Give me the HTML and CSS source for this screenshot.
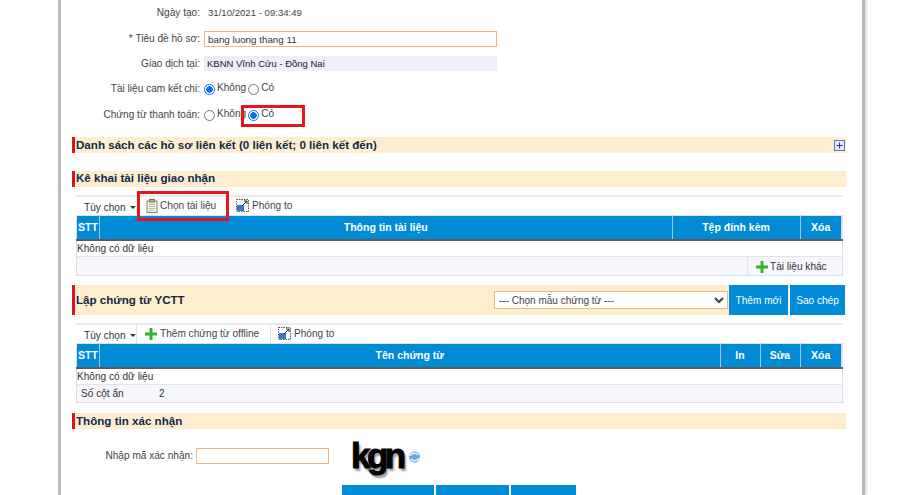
FILE: index.html
```html
<!DOCTYPE html>
<html lang="vi">
<head>
<meta charset="utf-8">
<title>Hồ sơ</title>
<link rel="stylesheet" href="styles.css">
</head>
<body>
<main class="sheet">
  <section class="form">
    <div class="row row-date"><label class="lbl">Ngày tạo:</label><span class="val">31/10/2021 - 09:34:49</span></div>
    <div class="row row-title"><label class="lbl">* Tiêu đề hồ sơ:</label><input class="txt txt-title" type="text" value="bang luong thang 11"></div>
    <div class="row row-place"><label class="lbl">Giao dịch tại:</label><span class="readonly">KBNN Vĩnh Cửu - Đồng Nai</span></div>
    <div class="row row-radio"><label class="lbl">Tài liệu cam kết chi:</label><span class="radio on"></span><span class="rtext">Không</span><span class="radio"></span><span class="rtext">Có</span></div>
    <div class="row row-radio"><label class="lbl">Chứng từ thanh toán:</label><span class="radio"></span><span class="rtext">Không</span><span class="radio on"></span><span class="rtext">Có</span></div>
  </section>

  <h2 class="bar bar-links"><span>Danh sách các hồ sơ liên kết (0 liên kết; 0 liên kết đến)</span>
    <svg class="plus-box" viewBox="0 0 11 11" width="11" height="11"><rect x=".5" y=".5" width="10" height="10" fill="#e4e9fb" stroke="#5a6fc8"/><path d="M5.500 2.500v6M2.500 5.500h6" stroke="#2b3a80"/></svg>
  </h2>

  <h2 class="bar bar-docs"><span>Kê khai tài liệu giao nhận</span></h2>
  <div class="toolbar">
    <span class="tool tool-menu">Tùy chọn<i class="caret"></i></span>
    <span class="tool tool-pick">
      <svg viewBox="0 0 12 14" width="12" height="14"><rect x="1" y="2" width="10" height="11.500" fill="#f4efe0" stroke="#8a8468"/><rect x="3.500" y=".5" width="5" height="2.500" fill="#c9b98a" stroke="#77704f"/><path d="M3 5.500h6M3 7.500h6M3 9.500h6M3 11.500h4" stroke="#a9c4b4"/></svg>
      Chọn tài liệu</span>
    <span class="tool">
      <svg viewBox="0 0 13 13" width="13" height="13"><rect x=".5" y=".5" width="12" height="12" fill="#fff" stroke="#555" stroke-dasharray="1.500 1"/><rect x="1" y="6" width="7" height="6" fill="#3b77c8"/><path d="M6 7l5-5M8 2h3v3" stroke="#222" fill="none"/></svg>
      Phóng to</span>
  </div>
  <table class="grid grid-docs">
    <thead><tr><th class="c-stt">STT</th><th>Thông tin tài liệu</th><th class="c-file">Tệp đính kèm</th><th class="c-del">Xóa</th></tr></thead>
    <tbody>
      <tr class="r-empty"><td colspan="4">Không có dữ liệu</td></tr>
      <tr class="r-foot"><td colspan="2"></td><td colspan="2" class="c-more">
        <span class="more"><svg viewBox="0 0 12 12" width="12" height="12"><path d="M4.500 0h3v4.500H12v3H7.500V12h-3V7.500H0v-3h4.500z" fill="#2fb52f"/></svg>Tài liệu khác</span></td></tr>
    </tbody>
  </table>

  <div class="bar-tall">
    <h2 class="bar-title">Lập chứng từ YCTT</h2>
    <select class="tpl"><option>--- Chọn mẫu chứng từ ---</option></select>
    <button class="btn btn-new" type="button">Thêm mới</button>
    <button class="btn btn-copy" type="button">Sao chép</button>
  </div>
  <div class="toolbar toolbar-2">
    <span class="tool tool-menu sep">Tùy chọn<i class="caret"></i></span>
    <span class="tool tool-add sep"><svg viewBox="0 0 12 12" width="12" height="12"><path d="M4.500 0h3v4.500H12v3H7.500V12h-3V7.500H0v-3h4.500z" fill="#2fb52f"/></svg>Thêm chứng từ offline</span>
    <span class="tool tool-zoom">
      <svg viewBox="0 0 13 13" width="13" height="13"><rect x=".5" y=".5" width="12" height="12" fill="#fff" stroke="#555" stroke-dasharray="1.500 1"/><rect x="1" y="6" width="7" height="6" fill="#3b77c8"/><path d="M6 7l5-5M8 2h3v3" stroke="#222" fill="none"/></svg>
      Phóng to</span>
  </div>
  <table class="grid grid-vouchers">
    <thead><tr><th class="c-stt">STT</th><th>Tên chứng từ</th><th class="c-in">In</th><th class="c-edit">Sửa</th><th class="c-del2">Xóa</th></tr></thead>
    <tbody>
      <tr class="r-empty"><td colspan="5">Không có dữ liệu</td></tr>
      <tr class="r-foot r-foot-2"><td colspan="5"><span class="hidden-lbl">Số cột ẩn</span><span>2</span></td></tr>
    </tbody>
  </table>

  <h2 class="bar bar-confirm"><span>Thông tin xác nhận</span></h2>
  <div class="captcha-row">
    <label class="lbl lbl-captcha">Nhập mã xác nhận:</label>
    <input class="txt txt-captcha" type="text">
    <span class="captcha">kgn</span>
    <svg class="refresh" viewBox="0 0 13 13" width="13" height="13"><circle cx="6.500" cy="7" r="5.500" fill="#6aa8dc"/><path d="M2 6c1-3 6-4 8-1M11 8c-1 3-6 4-8 1" stroke="#e4f2fb" stroke-width="1.500" fill="none"/></svg>
  </div>
  <div class="actions">
    <span class="act act-1"></span><span class="act act-2"></span><span class="act act-3"></span>
  </div>

  <span class="mark mark-radio"></span>
  <span class="mark mark-pick"></span>
</main>
</body>
</html>
```

FILE: styles.css
```css
* { box-sizing: border-box; }
html, body { margin: 0; height: 495px; overflow: hidden; background: #fff; }
body { font: 10.100px/12px "Liberation Sans", Arial, sans-serif; color: #333; }

.sheet {
  position: relative;
  width: 807px;
  height: 495px;
  margin-left: 58px;
  padding: 0 11px;
  overflow: hidden;
  background: #fff;
  border-left: 3px solid #b9b9b9;
  border-right: 3px solid #b9b9b9;
  box-shadow: 2px 0 2px #ddd;
}

.row { display: flex; align-items: center; }
.lbl { width: 128px; margin-right: 4px; text-align: right; color: #444; }
.row-date { height: 14px; margin-top: 6px; }
.row-title { height: 16px; margin-top: 11px; }
.row-place { height: 15px; margin-top: 9px; }
.row-radio { height: 14px; margin-top: 11px; }
.row-radio + .row-radio { margin-top: 12px; }

.val { margin-left: 4px; font-size: 9.600px; color: #444; }
.txt { border: 1px solid #e8b987; background: #fff; font: inherit; font-size: 9.800px; color: #333; padding: 0 3px; }
.txt-title { width: 293px; height: 16px; }
.readonly { width: 293px; height: 15px; padding-left: 3px; background: #eeeef8; color: #222; line-height: 15px; font-size: 9.500px; }
.radio { width: 11px; height: 11px; border: 1px solid #777; border-radius: 50%; background: #fff; flex: none; }
.radio.on { border-color: #0a6fe0; background: radial-gradient(circle, #0a6fe0 0 3px, #fff 3.500px); }
.rtext { margin: 0 2px 2px 2px; color: #444; }

.bar {
  display: flex;
  align-items: center;
  justify-content: space-between;
  height: 16px;
  width: 774px;
  margin: 0;
  padding: 0 1px 0 1px;
  background: #feeece;
  border-left: 3px solid #d7141d;
  font: bold 11.600px/16px "Liberation Sans", Arial, sans-serif;
  color: #13284b;
}
.bar-links { margin-top: 15px; }
.bar-docs { margin-top: 18px; padding-bottom: 2px; }
.bar-confirm { margin-top: 10px; }

.toolbar {
  display: flex;
  align-items: stretch;
  width: 767px;
  height: 20px;
  margin: 8px 0 0 4px;
  border-top: 2px solid #e6ebf2;
  color: #444;
}
.tool { display: inline-flex; align-items: center; gap: 3px; padding: 0 8px 1px; white-space: nowrap; }
.tool-menu { width: 61px; padding: 3px 0 0 8px; color: #333; white-space: nowrap; }
.tool-pick { width: 91px; padding-left: 9px; gap: 2px; }
.sep { border-right: 1px solid #dfe3ea; }
.tool-add { width: 134px; padding-left: 8px; }
.tool-zoom { padding-left: 7px; }
.caret { display: inline-block; margin-left: 1px; border: 3px solid transparent; border-top: 3px solid #333; border-bottom: 0; }

.grid {
  width: 767px;
  margin-left: 4px;
  border-collapse: collapse;
  table-layout: fixed;
  border: 1px solid #dbe0ea;
  color: #333;
}
.grid th {
  height: 24px;
  padding: 0;
  background: #008bd6;
  color: #fff;
  font-size: 10.500px;
  font-weight: bold;
  border-right: 1px solid #9cc9e8;
  border-bottom: 2px solid #5a5a5a;
}
.grid th:last-child { border-right: 2px solid #dbe0ea; }
.c-stt { width: 23px; }
.c-file { width: 128px; }
.c-del { width: 42px; }
.c-in { width: 40px; }
.c-edit { width: 40px; }
.c-del2 { width: 42px; }
.r-empty td { height: 17px; padding: 2px 0 0; border-bottom: 1px solid #dfe4ee; }
.r-foot td { height: 18px; padding: 0; background: #f6f7fd; }
.c-more { text-align: right; }
.more { display: flex; align-items: center; gap: 2px; height: 18px; margin-left: 75px; padding: 2px 0 0 8px; border-left: 1px solid #e2e5ee; }
.r-foot-2 td { padding: 0 0 0 4px; }
.hidden-lbl { display: inline-block; width: 78px; }

.bar-tall {
  display: flex;
  align-items: center;
  width: 773px;
  height: 30px;
  margin-top: 9px;
  background: #feeece;
  border-left: 3px solid #d7141d;
}
.bar-title { flex: 1; margin: 0; padding: 0 0 2px 1px; font: bold 11.600px "Liberation Sans", Arial, sans-serif; color: #13284b; }
.tpl { width: 234px; height: 18px; margin-right: 1px; border: 1px solid #e8b987; background: #fff; font: 10px "Liberation Sans", Arial, sans-serif; color: #444; }
.btn { height: 30px; border: 0; padding: 0; background: #008bd6; color: #fff; font: 10.100px "Liberation Sans", Arial, sans-serif; }
.btn-new { width: 59px; margin-right: 2px; }
.btn-copy { width: 55px; }

.toolbar-2 { margin-top: 8px; }

.captcha-row { display: flex; align-items: center; height: 36px; margin-top: 9px; }
.lbl-captcha { width: 121px; margin-right: 3px; }
.txt-captcha { width: 133px; height: 16px; }
.captcha {
  width: 52px;
  margin-left: 21px;
  padding-left: 1px;
  font: bold 35px/36px "Liberation Sans", Arial, sans-serif;
  letter-spacing: -3.500px;
  color: #000;
  text-shadow: 2px 3px 2px #999;
  -webkit-text-stroke: 1px #000;
}
.refresh { margin-left: 6px; }

.actions { display: flex; gap: 2px; margin: 11px 0 0 270px; }
.act { height: 12px; background: #008bd6; }
.act-1 { width: 92px; }
.act-2 { width: 73px; }
.act-3 { width: 65px; }

.mark { position: absolute; border: 3px solid #e8141c; pointer-events: none; }
.mark-radio { left: 180px; top: 105px; width: 64px; height: 22px; }
.mark-pick { left: 76px; top: 191px; width: 92px; height: 30px; }
```
